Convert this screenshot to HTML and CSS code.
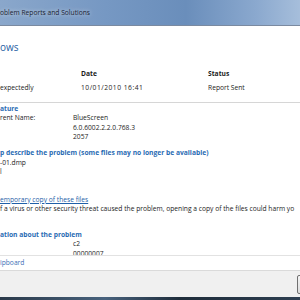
FILE: index.html
```html
<!DOCTYPE html>
<html lang="en">
<head>
    <meta charset="UTF-8">
    <title>Problem Reports and Solutions</title>
    <link rel="stylesheet" href="styles.css">
</head>
<body>
    <div class="window">
        <div class="titlebar">oblem Reports and Solutions</div>
        <div class="content">
            <div class="scroll">
                <h1 class="main-title">ows</h1>
                <div class="report-table">
                    <div class="th">Date</div>
                    <div class="th">Status</div>
                    <div class="td first">expectedly</div>
                    <div class="td date">10/01/2010 16:41</div>
                    <div class="td">Report Sent</div>
                </div>
                <div class="section first-section">
                    <h2 class="section-title">ature</h2>
                    <div class="details">
                        <div>rent Name:</div><div>BlueScreen</div>
                        <div></div><div>6.0.6002.2.2.0.768.3</div>
                        <div></div><div>2057</div>
                    </div>
                </div>
                <div class="section files-section">
                    <h2 class="section-title">p describe the problem (some files may no longer be available)</h2>
                    <div class="line">-01.dmp</div>
                    <div class="line">l</div>
                </div>
                <div class="section copy-section">
                    <a href="#" class="link">emporary copy of these files</a>
                    <div class="line nowrap">f a virus or other security threat caused the problem, opening a copy of the files could harm yo</div>
                </div>
                <div class="section extra-section">
                    <h2 class="section-title">ation about the problem</h2>
                    <div class="details">
                        <div></div><div>c2</div>
                        <div></div><div>00000007</div>
                    </div>
                </div>
            </div>
            <div class="clipboard-row">
                <a href="#" class="clip-link">ipboard</a>
            </div>
        </div>
        <div class="footer">
            <button class="btn" aria-label="OK"></button>
        </div>
        <div class="taskbar"></div>
    </div>
</body>
</html>
```

FILE: styles.css
```css
* {
    margin: 0;
    padding: 0;
    box-sizing: border-box;
}

body {
    width: 300px;
    height: 300px;
    overflow: hidden;
    font-family: "Open Sans", "Liberation Sans", sans-serif;
    font-size: 6.7px;
    color: #1b1b1b;
    background: #fff;
}

.window {
    display: flex;
    flex-direction: column;
    height: 300px;
}

.titlebar {
    height: 26px;
    flex: none;
    line-height: 25px;
    color: #1a2230;
    text-shadow: 0 0 4px rgba(255, 255, 255, 0.7);
    background: linear-gradient(90deg, #8aa7cb 0%, #7698c3 35%, #6a8ebb 62%, #8aa8ce 85%, #a6bedb 100%);
    border-bottom: 1px solid #7b8aa0;
}

.content {
    height: 245px;
    flex: none;
    display: flex;
    flex-direction: column;
    background: #fff;
}

.scroll {
    height: 229px;
    overflow: hidden;
    line-height: 9.5px;
}

.main-title {
    margin-top: 14px;
    font-size: 10px;
    font-weight: normal;
    line-height: 14px;
    color: #2660a3;
}

.report-table {
    display: grid;
    grid-template-columns: 81px 127px 1fr;
    row-gap: 4px;
    margin-top: 15px;
    padding-bottom: 9px;
    border-bottom: 1px solid #d6d6d6;
    line-height: 10px;
}

.report-table .th {
    font-weight: bold;
}

.report-table .th:first-child {
    grid-column: 2;
}

.date {
    letter-spacing: 0.5px;
}

.section-title {
    font-size: 6.7px;
    font-weight: bold;
    line-height: 9.5px;
    color: #2a6bb3;
    white-space: nowrap;
}

.first-section {
    margin-top: 0.5px;
}

.files-section {
    margin-top: 6.5px;
}

.copy-section {
    margin-top: 18px;
}

.extra-section {
    margin-top: 16px;
}

.details {
    display: grid;
    grid-template-columns: 73px 1fr;
}

.line {
    height: 9.5px;
}

.nowrap {
    white-space: nowrap;
}

.link,
.link:visited {
    display: block;
    color: #1f5fa8;
    text-decoration: underline;
}

.clipboard-row {
    height: 16px;
    border-top: 1px solid #e2e2e2;
    border-bottom: 1px solid #dadada;
    line-height: 14px;
}

.clip-link,
.clip-link:visited {
    color: #3d70b6;
    text-decoration: none;
}

.footer {
    flex: 1;
    display: flex;
    align-items: center;
    background: #f0f0f0;
    padding-left: 297px;
    overflow: hidden;
}

.btn {
    flex: none;
    width: 40px;
    height: 19px;
    border: 1px solid #707070;
    border-radius: 2px;
    background: linear-gradient(#f4f4f4, #dcdcdc);
}

.taskbar {
    height: 3px;
    flex: none;
    background: linear-gradient(90deg, #2b3a4a, #48627d 35%, #1f2d3b 60%, #2e3f51);
}
```
